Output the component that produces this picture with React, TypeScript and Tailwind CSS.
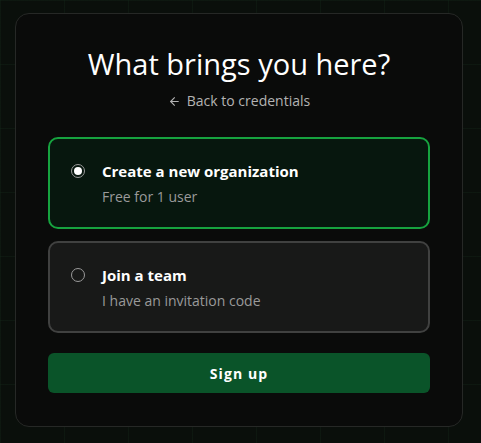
import React, { useState } from "react";

const font = { fontFamily: '"Open Sans", "Noto Sans", sans-serif' };

function Radio({ checked }: { checked: boolean }) {
  return (
    <span className="relative mt-[5px] flex h-[14px] w-[14px] shrink-0 items-center justify-center rounded-full border border-[#9a9a9a]">
      {checked && <span className="h-[8px] w-[8px] rounded-full bg-white" />}
    </span>
  );
}

function Option({
  checked,
  title,
  sub,
  onClick,
}: {
  checked: boolean;
  title: string;
  sub: string;
  onClick: () => void;
}) {
  return (
    <button
      onClick={onClick}
      className={
        "flex w-full items-start gap-[17px] rounded-[10px] border-2 px-[21px] pb-[20px] pt-[20px] text-left " +
        (checked ? "border-[#16a33f] bg-[#07170e]" : "border-[#404140] bg-[#181918]")
      }
    >
      <Radio checked={checked} />
      <div className="flex flex-col">
        <span className="text-[15px] font-bold leading-[24px] text-white">{title}</span>
        <span className="mt-[4px] text-[14px] leading-[20px] text-[#9a9a9a]">{sub}</span>
      </div>
    </button>
  );
}

export default function App() {
  const [sel, setSel] = useState(0);
  return (
    <div
      style={font}
      className="min-h-[443px] w-full bg-[#0a0f0b] bg-[linear-gradient(rgba(40,90,50,0.12)_1px,transparent_1px),linear-gradient(90deg,rgba(40,90,50,0.12)_1px,transparent_1px)] bg-[size:64px_64px] pl-[15px] pt-[13px]"
    >
      <div className="w-[448px] rounded-[14px] border border-[#262826] bg-[#0a0b0a] px-8 pb-[33px] pt-[32px]">
        <h1 className="text-center text-[29px] font-normal leading-[36px] text-white">
          What brings you here?
        </h1>
        <div className="mt-[9px] flex items-center justify-center gap-[6px] text-[14px] leading-[20px] text-[#b3b3b3]">
          <svg width="13" height="13" viewBox="0 0 24 24" fill="none" stroke="currentColor" strokeWidth="2" strokeLinecap="round" strokeLinejoin="round">
            <path d="M19 12H5" />
            <path d="M12 19l-7-7 7-7" />
          </svg>
          <span>Back to credentials</span>
        </div>
        <div className="mt-[26px] flex flex-col gap-[12px]">
          <Option checked={sel === 0} title="Create a new organization" sub="Free for 1 user" onClick={() => setSel(0)} />
          <Option checked={sel === 1} title="Join a team" sub="I have an invitation code" onClick={() => setSel(1)} />
        </div>
        <button className="mt-[20px] flex h-10 w-full items-center justify-center rounded-md bg-[#0a5429] text-[14px] font-bold tracking-[0.08em] text-white">
          Sign up
        </button>
      </div>
    </div>
  );
}
